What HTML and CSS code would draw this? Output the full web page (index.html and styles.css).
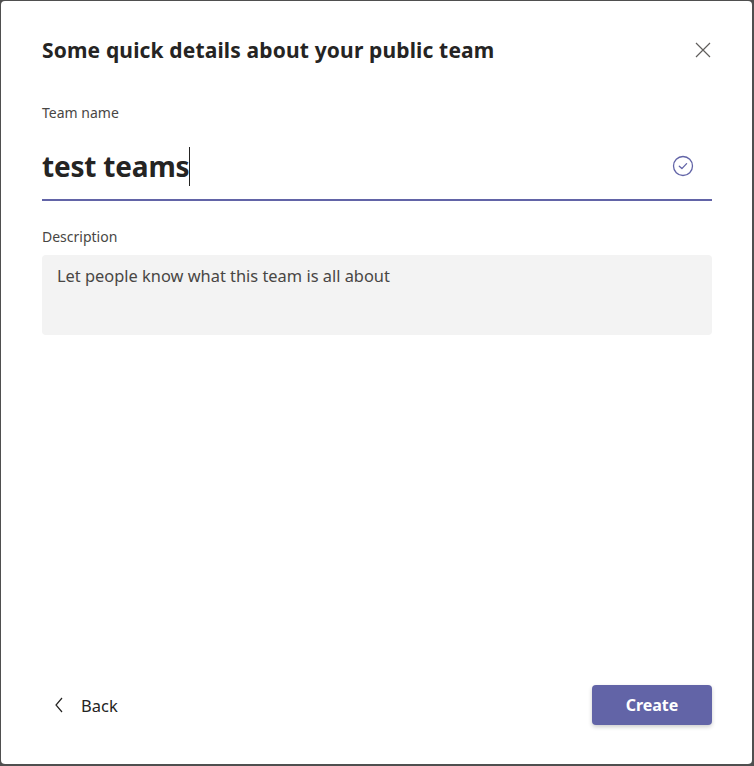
FILE: index.html
```html
<!DOCTYPE html>
<html>
<head>
<meta charset="utf-8">
<link rel="stylesheet" href="styles.css">
</head>
<body>
<div class="dialog">
  <div class="header">
    <h1 class="title">Some quick details about your public team</h1>
    <button class="close" aria-label="Close">
      <svg width="18" height="18" viewBox="0 0 18 18"><path d="M2 2 L16 16 M16 2 L2 16" stroke="#605e5c" stroke-width="1.2" fill="none"/></svg>
    </button>
  </div>
  <div class="field name-field">
    <div class="label">Team name</div>
    <div class="name-input">
      <span class="name-text">test teams</span><span class="caret"></span>
      <svg class="check" width="22" height="22" viewBox="0 0 22 22"><circle cx="11" cy="11" r="9.5" stroke="#6264a7" stroke-width="1.3" fill="none"/><path d="M7.3 11.2 L9.9 13.6 L14.6 8.6" stroke="#6264a7" stroke-width="1.3" fill="none" stroke-linecap="round" stroke-linejoin="round"/></svg>
    </div>
  </div>
  <div class="field desc-field">
    <div class="label">Description</div>
    <div class="textarea">Let people know what this team is all about</div>
  </div>
  <div class="spacer"></div>
  <div class="footer">
    <button class="back">
      <svg width="10" height="16" viewBox="0 0 10 16"><path d="M8 1 L2 8 L8 15" stroke="#252423" stroke-width="1.2" fill="none"/></svg>
      <span>Back</span>
    </button>
    <button class="create">Create</button>
  </div>
</div>
</body>
</html>
```
FILE: styles.css
```css
html, body {
  margin: 0;
  height: 100%;
}
body {
  background: #4f4f4f;
  padding: 1px 2px 2px 1px;
  box-sizing: border-box;
  font-family: "Noto Sans", "Open Sans", sans-serif;
  color: #252423;
}
.dialog {
  background: #fff;
  border-radius: 4px;
  height: 763px;
  box-sizing: border-box;
  padding: 0 40px 0 41px;
  display: flex;
  flex-direction: column;
}
.header {
  display: flex;
  align-items: center;
  justify-content: space-between;
  padding-top: 34px;
  height: 30px;
}
.title {
  margin: 0;
  font-size: 21px;
  font-weight: 700;
  letter-spacing: 0.15px;
  color: #252423;
}
.close {
  border: 0;
  background: none;
  padding: 0;
  margin-right: 0;
  width: 18px;
  height: 18px;
  display: flex;
}
.field {
  display: flex;
  flex-direction: column;
}
.label {
  font-size: 14px;
  color: #484644;
  line-height: 20px;
}
.name-field { margin-top: 38px; }
.name-input {
  margin-top: 17px;
  height: 52px;
  padding-bottom: 7px;
  border-bottom: 2px solid #6264a7;
  display: flex;
  align-items: center;
}
.name-text {
  font-size: 28px;
  font-weight: 700;
  color: #252423;
  letter-spacing: -0.2px;
}
.caret {
  width: 1px;
  height: 39px;
  background: #252423;
}
.check {
  margin-left: auto;
  margin-right: 18px;
}
.desc-field { margin-top: 26px; }
.textarea {
  margin-top: 8px;
  background: #f3f3f3;
  border-radius: 4px;
  height: 80px;
  box-sizing: border-box;
  padding: 9px 15px;
  font-size: 16.4px;
  color: #484644;
  line-height: 24px;
}
.spacer { flex: 1; }
.footer {
  display: flex;
  justify-content: space-between;
  align-items: center;
  margin-bottom: 39px;
}
.back {
  border: 0;
  background: none;
  font-family: inherit;
  font-size: 16.5px;
  color: #252423;
  display: flex;
  align-items: center;
  gap: 17px;
  padding: 0 0 0 12px;
}
.create {
  width: 120px;
  height: 40px;
  border: 0;
  border-radius: 4px;
  background: #6264a7;
  color: #fff;
  font-family: inherit;
  font-size: 16px;
  font-weight: 700;
  box-shadow: 0 2px 4px rgba(0,0,0,0.2);
}
```
